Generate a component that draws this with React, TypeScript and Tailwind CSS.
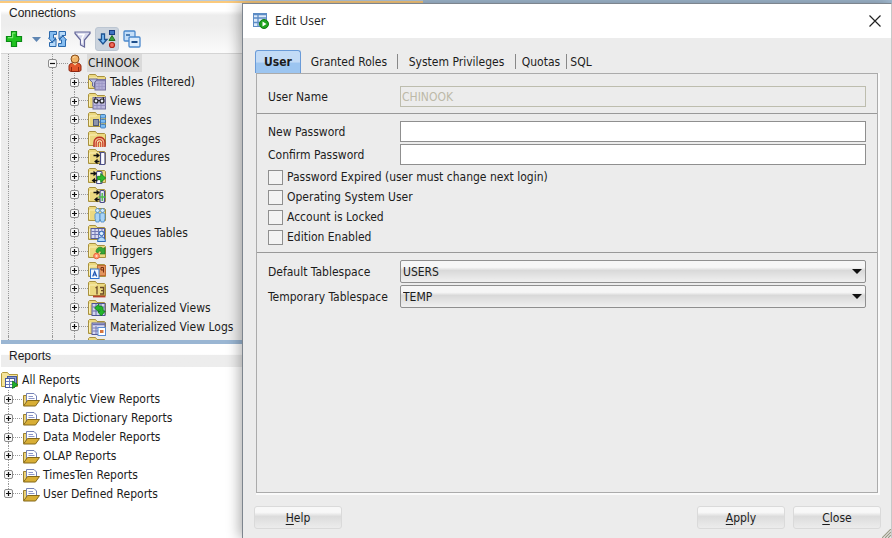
import { useState, type ReactNode } from "react";
import clsx from "clsx";

const GLYPHS: Record<string, ReactNode> = {
  tables: (
    <>
      <rect x="7" y="6.5" width="10.5" height="10.5" fill="#b3aed6" stroke="#77729f" />
      <path d="M7.5 7.5h9.5" stroke="#8580b0" strokeWidth="1.5" />
      <path d="M8 10.5h9M8 13.5h9M11 9v8M14 9v8" stroke="#9a95c4" strokeWidth=".8" />
      <path d="M1 6h8.500L6.500 9.500v5l-2-1.500V9.500z" fill="#bfc3e2" stroke="#5c5e94" strokeWidth=".9" />
    </>
  ),
  views: (
    <>
      <rect x="5" y="5.500" width="12.500" height="11.500" fill="#bcb8dd" stroke="#77739f" />
      <path d="M5.500 13.500h12M9 11v6M13 11v6" stroke="#8f8abb" strokeWidth=".9" />
      <circle cx="8" cy="9" r="2" fill="#e9edf6" stroke="#222" strokeWidth="1.200" />
      <circle cx="14" cy="9" r="2" fill="#e9edf6" stroke="#222" strokeWidth="1.200" />
      <path d="M10 8.500h2M6 8l2-3M16 8l-1-3" stroke="#222" />
    </>
  ),
  indexes: (
    <>
      <rect x="5.500" y="8.500" width="5" height="6" fill="#8c93ab" stroke="#4e5878" />
      <path d="M11 11h3M12.500 6v10" stroke="#4e6d9c" />
      <rect x="12.500" y="3.500" width="5" height="3.500" rx="1" fill="#7cbcf3" stroke="#2e6fb8" strokeWidth=".8" />
      <rect x="12.500" y="8.500" width="5" height="3.500" rx="1" fill="#7cbcf3" stroke="#2e6fb8" strokeWidth=".8" />
      <rect x="12.500" y="13.500" width="5" height="3.500" rx="1" fill="#7cbcf3" stroke="#2e6fb8" strokeWidth=".8" />
    </>
  ),
  packages: (
    <>
      <path d="M6 17v-4.500c0-7 11-7 11 0V17" fill="#f0b184" stroke="#b93022" strokeWidth="1.400" />
      <path d="M8.200 17v-4c0-4.500 6.600-4.500 6.600 0v4" fill="#f6d9a8" stroke="#c3281c" />
      <path d="M10.300 17v-4c0-1.500 2.400-1.500 2.400 0v4" fill="#f3dc7c" stroke="#c3281c" strokeWidth=".9" />
    </>
  ),
  procedures: (
    <>
      <path d="M11 4.500h2M11 16.500h2" stroke="#4a4d85" strokeWidth="1.200" />
      <rect x="12.500" y="4.500" width="4.500" height="12" rx="1" fill="#fbfbff" stroke="#4a4d85" strokeWidth="1.200" />
      <path d="M5.500 7.500h4M11.500 13.500H8" stroke="#111" strokeWidth="1.500" />
      <path d="M8.500 4.800l3.400 2.700-3.400 2.700zM9.500 10.800l-3.400 2.700 3.400 2.700z" fill="#111" />
    </>
  ),
  functions: (
    <>
      <rect x="8.500" y="4.500" width="5.500" height="12" rx="1" fill="#fbfbff" stroke="#4a4d85" strokeWidth="1.200" />
      <path d="M2.500 6.500h4M9.500 13.500H6" stroke="#111" strokeWidth="1.500" />
      <path d="M5.500 3.800l3.400 2.700-3.400 2.700zM7 10.800l-3.400 2.700L7 16.200z" fill="#111" />
      <path d="M9.500 9.300h3.200V6.500l5 4.500-5 4.500v-2.800H9.500z" fill="#2dbb2d" stroke="#0d7a17" strokeWidth=".8" />
    </>
  ),
  operators: (
    <>
      <rect x="12" y="4.500" width="4.500" height="12" rx="1" fill="#e6e6f6" stroke="#4a4d85" strokeWidth="1.200" />
      <path d="M5.500 6.500h4M11.500 13.500H8" stroke="#111" strokeWidth="1.500" />
      <path d="M8.500 3.800l3.400 2.700-3.400 2.700zM9.500 10.800l-3.400 2.700 3.400 2.700z" fill="#111" />
      <path d="M14.200 7v8M10.500 11h7.500" stroke="#4cbb4c" strokeWidth="1.400" />
    </>
  ),
  queues: (
    <>
      <circle cx="9.500" cy="5.500" r="2" fill="#d3ebfd" stroke="#4486c7" strokeWidth=".8" />
      <path d="M7 9.500c0-2 5-2 5 0v4L11 17H8l-1-3.500z" fill="#a8d3f6" stroke="#4486c7" strokeWidth=".8" />
      <circle cx="14.500" cy="5.500" r="2" fill="#d3ebfd" stroke="#4486c7" strokeWidth=".8" />
      <path d="M12 9.500c0-2 5-2 5 0v4L16 17h-3l-1-3.500z" fill="#a8d3f6" stroke="#4486c7" strokeWidth=".8" />
    </>
  ),
  queueTables: (
    <>
      <rect x="3" y="4.500" width="13.500" height="10" fill="#d9dbf2" stroke="#555a97" />
      <path d="M3.500 7.500h13M3.500 10.500h13M7 5v9M10.500 5v9M14 5v9" stroke="#7479b3" />
      <circle cx="13.500" cy="9.500" r="2.200" fill="#e0f0fd" stroke="#2e6cb8" />
      <path d="M9.500 17.500c.5-6 7.500-6 8 0z" fill="#b5dafa" stroke="#2e6cb8" />
    </>
  ),
  triggers: (
    <>
      <path d="M8 10c0-5 5-6 7-3.500l2-1V12h-5l1.500-2c-1.500-1.500-3-1-3.500 1z" fill="#36a838" stroke="#1c741f" strokeWidth=".6" />
      <circle cx="8.500" cy="14" r="2.800" fill="#ff9a70" stroke="#e8613a" />
      <circle cx="8.500" cy="14" r="1" fill="#ffe0c8" />
    </>
  ),
  types: (
    <>
      <rect x="9.500" y="4.500" width="8" height="10" fill="#e3945c" stroke="#c06c34" />
      <path d="M15.500 11.500v-5h-2.500v2.500h2.500" fill="none" stroke="#732d12" />
      <rect x="2.500" y="8" width="8.500" height="9.500" fill="#f3f8ff" stroke="#2f71cc" />
      <path d="M4.700 15.500l2-5 2 5M5.500 14h2.500" fill="none" stroke="#1c54b2" strokeWidth="1.200" />
    </>
  ),
  sequences: (
    <>
      <path d="M5 16.500h12.500" stroke="#b8432c" strokeWidth="1.800" />
      <path d="M17 5v11" stroke="#a08a3a" />
      <path d="M7.500 8L9 7v7.500M12 7.500h3.500v3.200H13h2.500v3.300H12" fill="none" stroke="#6b4a28" strokeWidth="1.300" />
    </>
  ),
  matViews: (
    <>
      <rect x="4" y="4.500" width="13" height="12" fill="#d3d4ee" stroke="#4d5492" />
      <path d="M4.500 8h12M4.500 12h12M8 5v11M13 5v11" stroke="#676dac" />
      <path d="M6.500 9l4.500-4v2.200c4-.7 4.500 1.800 4.200 4.600l2 .4-4 4.800-3.200-4 1.700-.5c.5-2-.3-2.300-.7-2v2.500z" fill="#22b52a" stroke="#0c7114" strokeWidth=".7" />
    </>
  ),
  matLogs: (
    <>
      <rect x="4" y="5" width="13" height="11.500" fill="#d9dbf2" stroke="#555a97" />
      <path d="M4.500 6.500h12.500" stroke="#6d72ad" strokeWidth="1.500" />
      <path d="M4.500 10h12M4.500 13h12M8 8v8" stroke="#7479b3" />
      <rect x="10" y="9.500" width="7.500" height="8" fill="#fff" stroke="#5b8bd0" />
      <path d="M12 13.500h3.500" stroke="#d6753d" strokeWidth="3" />
    </>
  ),
};

const OBJECTS = [
  ["Tables (Filtered)", "tables"],
  ["Views", "views"],
  ["Indexes", "indexes"],
  ["Packages", "packages"],
  ["Procedures", "procedures"],
  ["Functions", "functions"],
  ["Operators", "operators"],
  ["Queues", "queues"],
  ["Queues Tables", "queueTables"],
  ["Triggers", "triggers"],
  ["Types", "types"],
  ["Sequences", "sequences"],
  ["Materialized Views", "matViews"],
  ["Materialized View Logs", "matLogs"],
];

const REPORTS = [
  "Analytic View Reports",
  "Data Dictionary Reports",
  "Data Modeler Reports",
  "OLAP Reports",
  "TimesTen Reports",
  "User Defined Reports",
];

const TABS = [
  { name: "User", cls: "w-[46px]" },
  { name: "Granted Roles", cls: "w-[97px]" },
  { name: "System Privileges", cls: "w-[118px]" },
  { name: "Quotas", cls: "w-[51px]" },
  { name: "SQL", cls: "w-[28px]" },
];

const FLAGS = [
  "Password Expired (user must change next login)",
  "Operating System User",
  "Account is Locked",
  "Edition Enabled",
];

function Folder({ children }: { children?: ReactNode }) {
  return (
    <svg viewBox="0 0 18 18" className="size-[18px] shrink-0" aria-hidden="true">
      <path d="M.5 15.500V2.500l1-1h6l1.500 2h7.500l1 1v11z" fill="#ecd981" stroke="#a8913f" />
      <path d="M1.500 14V5h6l1.500-1" fill="none" stroke="#faf0b8" />
      {children}
    </svg>
  );
}

function ReportFolder() {
  return (
    <svg viewBox="0 0 18 18" className="size-[18px] shrink-0" aria-hidden="true">
      <path d="M1.500 15.500v-10h3l1 1.500v4" fill="#ecd277" stroke="#9b8030" />
      <path d="M4.500 12.500v-9h7.500l2.500 2.500v6.500z" fill="#fff" stroke="#7582b5" />
      <path d="M6.500 6.500h4.500M6.500 8.500h6" stroke="#8c96c8" />
      <path d="M1.500 16l4-5.500h12l-4 5.500z" fill="#d8ae35" stroke="#84681a" />
    </svg>
  );
}

// expander box with the dotted guide running above and below it
function Expander({ open, last }: { open?: boolean; last?: boolean }) {
  return (
    <span className="flex w-[9px] shrink-0 flex-col items-center self-stretch">
      <span className="flex-1 border-l border-dotted border-[#999]" />
      <button
        aria-label={open ? "Collapse" : "Expand"}
        className="grid size-[9px] shrink-0 place-items-center rounded-[2px] border border-[#8c8c8c] bg-[#f8f8f8]"
      >
        <svg viewBox="0 0 7 7" className="size-[7px]">
          <path d={open ? "M1 3.500h5" : "M1 3.500h5M3.500 1v5"} stroke="#111" strokeWidth="1.200" />
        </svg>
      </button>
      <span className={clsx("flex-1 border-l border-dotted", last ? "border-transparent" : "border-[#999]")} />
    </span>
  );
}

function ConnectionsToolbar() {
  return (
    <div className="flex h-[29px] items-center border-b border-[#d4d4d4] bg-linear-to-b from-[#ededed] to-[#fbfbfb] pl-[4px]">
      <button aria-label="New connection" className="mr-[9px]">
        <svg viewBox="0 0 18 18" className="size-[18px]">
          <path d="M6.500 1.500h5v5h5v5h-5v5h-5v-5h-5v-5h5z" fill="#1fc21f" stroke="#0a8a14" strokeWidth="1.200" />
          <path d="M7.500 3h3M3 7.700h4.700V3" fill="none" stroke="#8df283" />
        </svg>
      </button>
      <button aria-label="Connection options" className="mr-[7px]">
        <svg viewBox="0 0 9 5" className="h-[5px] w-[9px]">
          <path d="M0 0h9L4.500 5z" fill="#5f86b3" />
        </svg>
      </button>
      <button aria-label="Refresh" className="mr-[7px]">
        <svg viewBox="0 0 19 18" className="h-[18px] w-[19px]">
          <path d="M1.500 1.500h7v3H5.500V8h2.500l-4 4-3.500-4h1z" fill="#86bdf0" stroke="#2a69ad" />
          <path d="M1.500 16.500v-4h3.500l3-3.500v7.500z" fill="#b7daf9" stroke="#2a69ad" />
          <path d="M17.500 16.500h-7v-3h3V10H11l4-4 3.500 4h-1z" fill="#86bdf0" stroke="#2a69ad" />
          <path d="M17.500 1.500v4H14L11 9V1.500z" fill="#b7daf9" stroke="#2a69ad" />
        </svg>
      </button>
      <button aria-label="Filter" className="mr-[4px]">
        <svg viewBox="0 0 17 17" className="size-[17px]">
          <path d="M1 1h15v1.500L10.500 9v7l-4-2V9L1 2.500z" fill="#d7d8ec" stroke="#65689a" strokeWidth="1.200" />
          <path d="M4 3.500h6L8 7.500v5" fill="none" stroke="#fff" strokeWidth="1.500" />
        </svg>
      </button>
      <button aria-label="Sort" className="mr-[4px] grid size-[24px] place-items-center rounded-[3px] border border-[#bcc6d2] bg-[#cbd3dd]">
        <svg viewBox="0 0 20 20" className="size-[20px]">
          <path d="M4.500 5h3v5.500H10L6 15l-4-4.500h2.500z" fill="#7fc0f8" stroke="#1d5291" strokeWidth="1.300" />
          <rect x="12.500" y="1.500" width="5" height="4" fill="#3f74c2" stroke="#1b3f85" />
          <path d="M15 6.500l3 5h-6z" fill="#3da23c" stroke="#20701f" />
          <circle cx="15" cy="16" r="2.500" fill="#f0705c" stroke="#b02318" strokeWidth="1.200" />
        </svg>
      </button>
      <button aria-label="Collapse all">
        <svg viewBox="0 0 18 18" className="size-[18px]">
          <rect x="1" y="1" width="11" height="10" rx="1" fill="#c4def8" stroke="#4a88cc" strokeWidth="1.300" />
          <path d="M3 5h4" stroke="#28609f" strokeWidth="1.500" />
          <rect x="6" y="7" width="11" height="10" rx="1" fill="#dcecfc" stroke="#4a88cc" strokeWidth="1.300" />
          <path d="M8.500 12h6" stroke="#1d4e8b" strokeWidth="2" />
        </svg>
      </button>
    </div>
  );
}

function Sidebar() {
  return (
    <aside className="flex w-[242px] shrink-0 flex-col border-l border-white bg-white">
      <section className="border-b-4 border-[#9ab6d3] bg-[#ededed]">
        <h2 className="h-[22px] bg-linear-to-b from-white from-35% to-[#ededed] to-55% pl-[8px] font-['Liberation_Sans',sans-serif] text-[12px] leading-[21px]">
          Connections
        </h2>
        <ConnectionsToolbar />
        <ul className="flex h-[282px] flex-col">
          <li className="flex flex-1 items-center">
            <span className="w-[8px] self-stretch border-r border-dotted border-[#999]" />
            <span className="w-[39px]" />
            <Expander open />
            <span className="w-[11px] border-t border-dotted border-[#999]" />
            <svg viewBox="0 0 14 18" className="h-[18px] w-[14px] shrink-0" aria-hidden="true">
              <path d="M1 16.500V12C1 7.500 13 7.500 13 12v4.500l-2 1H3z" fill="#e2572c" stroke="#8f2812" />
              <path d="M3.500 17v-4M10.500 17v-4" stroke="#8f2812" />
              <path d="M4.500 9L7 11.500 9.500 9z" fill="#f7d9a8" />
              <circle cx="7" cy="5" r="4" fill="#f0b468" stroke="#8a4f1c" />
              <path d="M5 4c.5-1 1.500-1.500 2.500-1" fill="none" stroke="#fde3b4" />
            </svg>
            <span className="ml-[5px] bg-[#dadada] pr-[3px] pl-px leading-[18px]">CHINOOK</span>
          </li>
          {OBJECTS.map(([label, glyph]) => (
            <li key={label} className="flex flex-1 items-center">
              <span className="w-[8px] self-stretch border-r border-dotted border-[#999]" />
              <span className="w-[44px] self-stretch border-r border-dotted border-[#999]" />
              <span className="w-[17px]" />
              <Expander />
              <span className="w-[9px] border-t border-dotted border-[#999]" />
              <Folder>{GLYPHS[glyph]}</Folder>
              <span className="ml-[4px] whitespace-nowrap">{label}</span>
            </li>
          ))}
        </ul>
        {/* next node, cut off by the splitter */}
        <div className="flex h-[4px] overflow-hidden">
          <span className="w-[8px] border-r border-dotted border-[#999]" />
          <span className="w-[44px] border-r border-dotted border-[#999]" />
          <span className="w-[22px] border-r border-dotted border-[#999]" />
          <span className="w-[13px]" />
          <Folder />
        </div>
      </section>
      <section>
        <h2 className="h-[23px] bg-linear-to-b from-white from-45% to-[#ededed] to-50% pl-[8px] font-['Liberation_Sans',sans-serif] text-[12px] leading-[24px]">
          Reports
        </h2>
        <ul className="mt-[4px] flex h-[132px] flex-col">
          <li className="flex flex-1 items-center">
            <svg viewBox="0 0 18 18" className="size-[18px] shrink-0" aria-hidden="true">
              <path d="M.5 15.500v-13l1-1h5l1.500 2h8.500v12z" fill="#f6e49a" stroke="#b39a3c" />
              <rect x="6.500" y="5.500" width="9" height="9" fill="#8fa2d4" stroke="#47599c" />
              <rect x="4.500" y="7.500" width="9" height="9" fill="#fff" stroke="#47599c" />
              <path d="M5 10.500h8M5 13.500h8M8.500 8v8" stroke="#6e7fc0" />
              <path d="M11.500 10l5.500 3.800-5.500 3.700z" fill="#1fae2a" stroke="#0b7213" strokeWidth=".7" />
            </svg>
            <span className="ml-[3px]">All Reports</span>
          </li>
          {REPORTS.map((label, i) => (
            <li key={label} className="flex flex-1 items-center">
              <span className="w-[3px]" />
              <Expander last={i === REPORTS.length - 1} />
              <span className="w-[9px] border-t border-dotted border-[#999]" />
              <ReportFolder />
              <span className="ml-[3px] whitespace-nowrap">{label}</span>
            </li>
          ))}
        </ul>
      </section>
    </aside>
  );
}

function Field({ id, label, children }: { id: string; label: string; children: ReactNode }) {
  return (
    <div className="flex items-center">
      <label htmlFor={id} className="w-[132px] shrink-0">{label}</label>
      {children}
    </div>
  );
}

function TablespaceSelect({ id, value }: { id: string; value: string }) {
  return (
    <div className="relative flex-1">
      <select
        id={id}
        defaultValue={value}
        className="block h-[23px] w-full appearance-none rounded-[2px] border border-[#8f8f8f] bg-linear-to-b from-[#f6f6f6] from-30% via-[#d9d9d9] via-45% to-[#f0f0f0] pl-[2px]"
      >
        <option>{value}</option>
      </select>
      <svg viewBox="0 0 10 5" className="pointer-events-none absolute top-[9px] right-[4px] h-[5px] w-[10px]">
        <path d="M0 0h10L5 5z" fill="#111" />
      </svg>
    </div>
  );
}

function DialogButton({ mnemonic, rest }: { mnemonic: string; rest: string }) {
  return (
    <button className="h-[23px] w-[88px] rounded-[3px] border border-[#dadada] bg-linear-to-b from-[#f8f8f8] from-25% via-[#dcdcdc] via-45% to-[#ececec]">
      <u className="underline-offset-2">{mnemonic}</u>
      {rest}
    </button>
  );
}

function EditUserDialog() {
  const [tab, setTab] = useState("User");

  return (
    <main
      role="dialog"
      aria-label="Edit User"
      className="relative flex min-w-0 flex-1 flex-col border-t border-r border-l border-[#7d858e] border-r-[#c8c8c8] bg-[#ececec] shadow-[-3px_0_12px_rgba(0,0,0,0.3)]"
    >
      <header className="flex h-[34px] items-center bg-white pr-[10px] pl-[10px]">
        <svg viewBox="0 0 16 16" className="size-[16px]" aria-hidden="true">
          <rect x=".5" y=".5" width="13" height="13" fill="#dceafa" stroke="#5d8cc5" />
          <path d="M.5 1.500h13M1 5h12M1 9.500h12M5 1v12" stroke="#5d8cc5" strokeWidth="1.300" />
          <circle cx="11" cy="11" r="4.500" fill="#1fa51f" stroke="#0d7a12" />
          <path d="M9.500 8.500l4 2.500-4 2.500z" fill="#fff" />
        </svg>
        <h1 className="ml-[6px] flex-1 font-['Open_Sans',sans-serif] text-[12px]">Edit User</h1>
        <button aria-label="Close window">
          <svg viewBox="0 0 12 12" className="size-[12px]">
            <path d="M.5.5l11 11M11.500.5l-11 11" stroke="#222" strokeWidth="1.200" />
          </svg>
        </button>
      </header>

      <div className="flex flex-1 flex-col pt-[12px] pr-[13px] pl-[12px]">
        <div role="tablist" className="flex h-[23px]">
          {TABS.map(({ name, cls }, i) => (
            <button
              key={name}
              role="tab"
              aria-selected={tab === name}
              onClick={() => setTab(name)}
              className={clsx(
                "flex items-center justify-center whitespace-nowrap",
                cls,
                tab === name &&
                  "rounded-t-[3px] border border-b-0 border-[#6a9bd8] bg-linear-to-b from-[#c3dbf6] from-50% to-[#9cc5f0] to-55% font-bold",
              )}
            >
              <span className="flex-1">{name}</span>
              {i > 0 && i < TABS.length - 1 && <span className="h-[15px] w-px bg-[#888]" />}
            </button>
          ))}
        </div>

        <form
          onSubmit={(e) => e.preventDefault()}
          className="ml-px flex-1 border border-[#ababab] shadow-[1px_1px_0_1px_#fafafa]"
        >
          <div className="border-b border-[#999] pt-[12px] pr-[11px] pb-[6px] pl-[11px]">
            <Field id="user-name" label="User Name">
              <input
                id="user-name"
                disabled
                defaultValue="CHINOOK"
                className="h-[21px] min-w-0 flex-1 border border-[#bdbdae] bg-[#ececec] pl-px text-[#bcb9a8]"
              />
            </Field>
          </div>

          <div className="border-b border-[#999] pt-[7px] pr-[11px] pb-[5px] pl-[11px]">
            <div className="flex flex-col gap-[2px]">
              <Field id="new-password" label="New Password">
                <input id="new-password" type="password" className="h-[21px] min-w-0 flex-1 border border-[#8f8f8f] bg-white px-1" />
              </Field>
              <Field id="confirm-password" label="Confirm Password">
                <input id="confirm-password" type="password" className="h-[21px] min-w-0 flex-1 border border-[#8f8f8f] bg-white px-1" />
              </Field>
            </div>
            <div className="mt-[2px] flex flex-col">
              {FLAGS.map((flag) => (
                <label key={flag} className="flex h-[20px] items-center gap-[4px]">
                  <input type="checkbox" className="size-[15px] appearance-none border border-[#8f8f8f] bg-[#f3f3f3] checked:bg-[#9cc5f0]" />
                  {flag}
                </label>
              ))}
            </div>
          </div>

          <div className="flex flex-col gap-[2px] pt-[7px] pr-[11px] pl-[11px]">
            <Field id="default-ts" label="Default Tablespace">
              <TablespaceSelect id="default-ts" value="USERS" />
            </Field>
            <Field id="temp-ts" label="Temporary Tablespace">
              <TablespaceSelect id="temp-ts" value="TEMP" />
            </Field>
          </div>
        </form>
      </div>

      <footer className="flex h-[45px] items-start gap-[8px] pt-[13px] pr-[10px] pl-[11px]">
        <DialogButton mnemonic="H" rest="elp" />
        <span className="flex-1" />
        <DialogButton mnemonic="A" rest="pply" />
        <DialogButton mnemonic="C" rest="lose" />
      </footer>
      <svg viewBox="0 0 9 9" className="absolute right-0 bottom-0 size-[9px]" aria-hidden="true">
        <path d="M0 9L9 0M3 9l6-6M6 9l3-3" stroke="#9a9a86" strokeWidth="1.200" />
      </svg>
    </main>
  );
}

export default function App() {
  return (
    <div className="flex min-h-screen flex-col overflow-hidden bg-white font-['DejaVu_Sans_Condensed','DejaVu_Sans',sans-serif] text-[12px] leading-[16px] text-[#1c1c1c]">
      {/* edge of the main window's tab bar */}
      <div className="flex h-[3px]">
        <span className="w-[423px] border-t border-[#b9cbdc] bg-[#fbca7d]" />
        <span className="flex-1 bg-[#a3bbd2]" />
      </div>
      <div className="flex flex-1">
        <Sidebar />
        <EditUserDialog />
      </div>
    </div>
  );
}
